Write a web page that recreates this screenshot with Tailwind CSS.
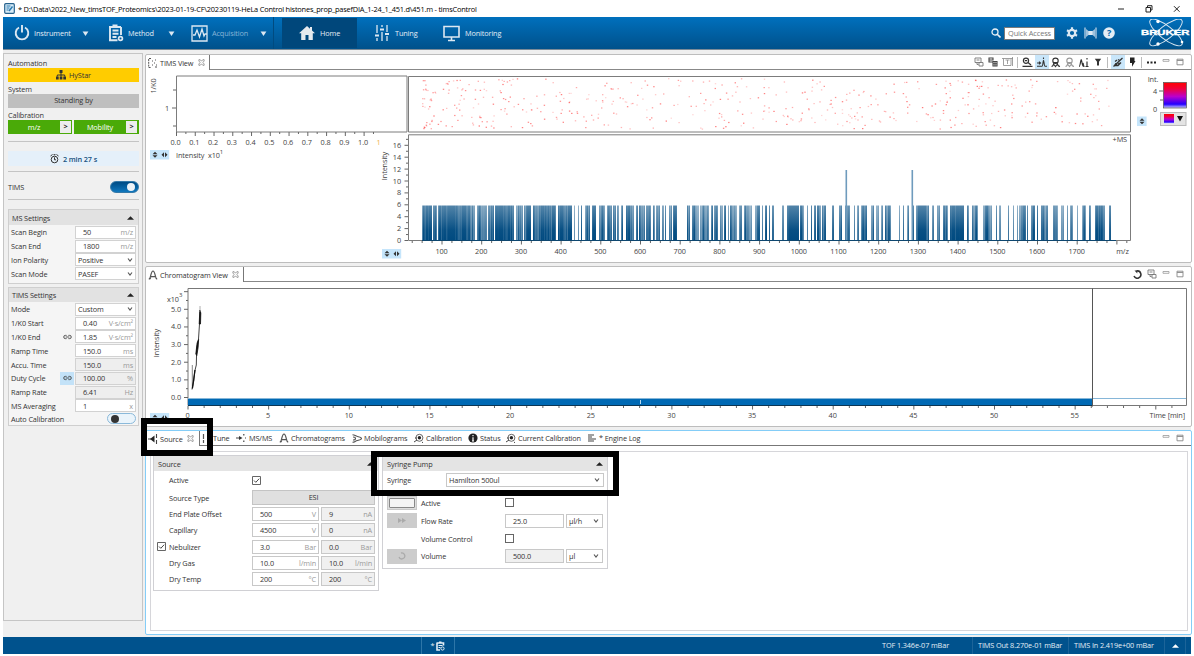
<!DOCTYPE html>
<html lang="en">
  <head>
    <meta charset="UTF-8" />
    <meta name="viewport" content="width=device-width, initial-scale=1.0" />
    <script src="https://cdn.jsdelivr.net/npm/@tailwindcss/browser@4"></script>
    <title>timsControl</title>
  </head>
  <body class="w-[1194px] h-[656px] overflow-hidden bg-white font-['Open_Sans',sans-serif] text-[7.3px] leading-[10px] tracking-[-0.12px] text-[#333]">
    <!-- Shared icons -->
    <svg class="hidden">
      <symbol id="i-close" viewBox="0 0 8 8"><path d="M1 .8h1.500L4 2.500 5.500 .8H7v1.500L5.600 4 7 5.700v1.500H5.500L4 5.500 2.500 7.200H1V5.700L2.400 4 1 2.300z" fill="none" stroke="#777" stroke-width=".8" /></symbol>
      <symbol id="i-chrom" viewBox="0 0 10 10"><path d="M.8 9.200c1.500-.3 1.600-2 2-4C3.400 2.400 3.800 1 5 1s1.600 1.400 2.200 4.200c.4 2 .5 3.700 2 4M2.500 6.600h5M2.700 7.500c-.3 1-.8 1.500-1.300 1.500" fill="none" stroke="#555" stroke-width="1.200" /></symbol>
      <symbol id="i-target" viewBox="0 0 10 10"><circle cx="5.400" cy="4.800" r="3.500" fill="none" stroke="#555" stroke-width=".9" /><circle cx="5.400" cy="4.800" r="1.700" fill="#222" /><path d="M0 9l3-2M1 5h2M8 9l1 .8" stroke="#444" stroke-width="1" /></symbol>
      <symbol id="i-min" viewBox="0 0 8 8"><path d="M1 1.500h6v1.800H1z" fill="none" stroke="#999" stroke-width=".8" /></symbol>
      <symbol id="i-max" viewBox="0 0 8 8"><path d="M1 1.200h6v5.600H1zM1 2.500h6" fill="none" stroke="#888" stroke-width=".9" /></symbol>
      <symbol id="i-copy" viewBox="0 0 10 10"><path d="M1 1h6v4.500H1zM2.500 3h3M5 5.500h4v3.500H5zM3 5.500v2h1.500" fill="none" stroke="currentColor" stroke-width=".9" /></symbol>
      <symbol id="i-link" viewBox="0 0 10 6"><path d="M4 1.200H2.600a1.800 1.800 0 0 0 0 3.600H4M6 1.200h1.400a1.800 1.800 0 0 1 0 3.600H6M3 3h4" fill="none" stroke="#333" stroke-width=".9" /></symbol>
      <symbol id="i-down" viewBox="0 0 6 6"><path d="M1 1.500l2 2.700 2-2.700" fill="none" stroke="#555" stroke-width="1.100" /></symbol>
      <symbol id="i-up" viewBox="0 0 8 4"><path d="M0 4L4 0l4 4z" fill="#222" /></symbol>
      <symbol id="i-caret" viewBox="0 0 8 6"><path d="M.5.500h7L4 6z" fill="#dce8f2" /></symbol>
      <symbol id="i-check" viewBox="0 0 9 9"><path d="M.5.500h8v8h-8z" fill="#fff" stroke="#555" stroke-width=".9" /><path d="M2 4.500l1.800 1.800L7.200 2.700" fill="none" stroke="#333" stroke-width=".9" /></symbol>
      <symbol id="i-peak" viewBox="0 0 11 11"><circle cx="5.500" cy="3.800" r="2.700" fill="none" stroke="currentColor" stroke-width="1.100" /><path d="M1.500 9.500c2 0 2-2.500 2.500-4h3c.4 2 .6 3.600 3 4M3.500 7l2 2.500 2-2.500" fill="none" stroke="currentColor" stroke-width="1.100" /></symbol>
    </svg>

    <div class="flex flex-col w-[1194px] h-[656px]">
      <!-- Title bar -->
      <header class="flex items-center h-[17px] pl-1 shrink-0">
        <svg class="w-[11px] h-[11px]" viewBox="0 0 11 11"><rect x=".7" y=".7" width="9.600" height="9.600" rx="1" fill="#d8ecf7" stroke="#28638e" stroke-width="1.200" /><path d="M2.500 3h4M2.500 5h3M2.500 7h2" stroke="#2b79b0" /><path d="M5 8l3.500-4.500" stroke="#2b79b0" stroke-width="1.500" /></svg>
        <h1 class="ml-[3px] text-[7.400px] tracking-[-0.200px] text-black whitespace-nowrap">* D:\Data\2022_New_timsTOF_Proteomics\2023-01-19-CF\20230119-HeLa Control histones_prop_pasefDIA_1-24_1_451.d\451.m - timsControl</h1>
        <svg class="ml-auto mr-3 w-[68px] h-[10px]" viewBox="0 0 68 10"><path d="M4 5h6M32 3.500h4.500V8H32zM33.500 3V1.700h4.500V6h-1M60 2.200l5.500 5.500M65.500 2.200L60 7.700" fill="none" stroke="#222" stroke-width="1" /></svg>
      </header>

      <!-- Main navigation -->
      <nav class="flex items-center h-[32px] mx-[3px] shrink-0 bg-linear-to-b from-[#0070bd] to-[#00518b] text-[#e4eef6]">
        <svg class="ml-[11px] w-4 h-4" viewBox="0 0 16 16"><path d="M5 2.500a6.300 6.300 0 1 0 6 0M8 0v7.500" fill="none" stroke="#dce8f2" stroke-width="1.900" /></svg>
        <span class="ml-1 w-[48px]">Instrument</span>
        <svg class="w-[7px] h-[5px]"><use href="#i-caret" /></svg>
        <svg class="ml-[19px] w-4 h-[18px]" viewBox="0 0 16 18"><path d="M1 3h12M4.500 1.500h5M2 3v13M1 16.200h8.500M13 3v8M4.500 6.500h6M4.500 9.700h6M4.500 13h4" fill="none" stroke="#dce8f2" stroke-width="1.900" /><circle cx="12.500" cy="14.500" r="1.900" fill="none" stroke="#dce8f2" stroke-width="1.700" /></svg>
        <span class="ml-1 w-[40px]">Method</span>
        <svg class="w-[7px] h-[5px]"><use href="#i-caret" /></svg>
        <svg class="ml-[16px] w-[17px] h-[17px]" viewBox="0 0 17 17"><path d="M1 1h15v15H1z" fill="none" stroke="#dce8f2" stroke-width="1.300" /><path d="M2 10h2l2-5 2.500 7L11 4l2 7 1-2h2" fill="none" stroke="#dce8f2" stroke-width="1.300" /></svg>
        <span class="ml-1 w-[48px] text-[#87b4d6]">Acquisition</span>
        <svg class="w-[7px] h-[5px]"><use href="#i-caret" /></svg>
        <div class="ml-[6px] w-px h-full bg-[#004b80]"></div>
        <div class="ml-[8px] flex items-center w-[75px] h-[30px] bg-[#00477b]">
          <svg class="ml-[17px] w-4 h-[14px]" viewBox="0 0 16 14"><path d="M8 0L0 7.300h2.200V14H6.500V9h3v5h4.300V7.300H16L13 4.500V1h-2v1.700z" fill="#e6eaee" /></svg>
          <span class="ml-[5px]">Home</span>
        </div>
        <svg class="ml-[17px] w-4 h-[18px]" viewBox="0 0 16 18"><path d="M3 1v8M3 14v3M8 1v2M8 8v9M13 1v7M13 12v5" stroke="#dce8f2" stroke-width="1.300" /><path d="M1 11.500h4M6 5.500h4M11 10h4" stroke="#dce8f2" stroke-width="2.200" /></svg>
        <span class="ml-[5px] w-[48px]">Tuning</span>
        <svg class="w-[17px] h-[17px]" viewBox="0 0 17 17"><path d="M1 1.500h15v10.500H1zM8.500 12v3M5 15.500h7" fill="none" stroke="#dce8f2" stroke-width="1.600" /></svg>
        <span class="ml-[5px]">Monitoring</span>
        <svg class="ml-auto w-[10px] h-[10px]" viewBox="0 0 10 10"><circle cx="4" cy="4" r="3" fill="none" stroke="#e8f0f6" stroke-width="1.300" /><path d="M6.200 6.200L9.500 9.500" stroke="#e8f0f6" stroke-width="1.600" /></svg>
        <div class="ml-[3px] w-[51px] h-[13px] pl-[3px] bg-white border border-[#7a7a7a] text-[#777] text-[7.400px] leading-[11px] whitespace-nowrap">Quick Access</div>
        <svg class="ml-[11px] w-3 h-3" viewBox="0 0 12 12"><circle cx="6" cy="6" r="3.200" fill="none" stroke="#dde9f3" stroke-width="2.200" /><path d="M6 .3v2M6 9.700v2M1 3.200l1.800 1M9.200 7.800l1.800 1M1 8.800l1.800-1M9.200 4.200l1.800-1" stroke="#dde9f3" stroke-width="2.200" /></svg>
        <svg class="ml-[6px] w-[13px] h-3" viewBox="0 0 13 12"><path d="M1 .5v11M12 .5v11" stroke="#b9d2e6" stroke-width="1.300" /><path d="M2 2l2.500 2h4L11 2v8L8.500 8h-4L2 10z" fill="#9fc2dd" /><path d="M4.500 4h4v4h-4z" fill="#dde9f3" /></svg>
        <svg class="ml-[6px] w-3 h-3" viewBox="0 0 12 12"><circle cx="6" cy="6" r="5.800" fill="#e4edf5" /><text x="6" y="9.300" text-anchor="middle" font-size="9" font-weight="700" fill="#0062a5">?</text></svg>
        <svg class="ml-[26px] mr-px w-[49px] h-[28px]" viewBox="0 0 49 28">
          <g fill="none" stroke="#d8e6f1" stroke-width="1"><ellipse cx="25" cy="13.500" rx="20" ry="6.500" transform="rotate(38 25 13.500)" /><ellipse cx="25" cy="13.500" rx="20" ry="6.500" transform="rotate(-38 25 13.500)" /></g>
          <circle cx="17" cy="2.500" r="1.700" fill="#fff" /><circle cx="17" cy="25" r="1.700" fill="#fff" /><circle cx="41" cy="23" r="1.300" fill="#fff" />
          <text x="0" y="16.200" font-family="Liberation Sans" font-weight="700" font-size="7.800" letter-spacing="0" textLength="48.500" lengthAdjust="spacingAndGlyphs" fill="#fff" stroke="#fff" stroke-width=".35">BRUKER</text>
        </svg>
      </nav>

      <div class="flex h-[588px] mx-[3px] bg-[#efefef] border-t border-[#7b8b98] shrink-0">
        <!-- Status and settings sidebar -->
        <aside class="w-[140px] h-[568px] mt-[3px] pl-1 pr-[3px] pt-1 bg-[#f0f0f0] border border-[#c5c5c5] flex flex-col shrink-0">
          <div class="h-[10px]">Automation</div>
          <div class="h-[14px] flex items-center justify-center gap-[3px] bg-[#fc0]">
            <svg class="w-[10px] h-[10px]" viewBox="0 0 10 10"><path d="M3.500 0h3v3h-3zM0 6.500h2.700v3H0zM3.700 6.500h2.700v3H3.700zM7.300 6.500H10v3H7.300z" fill="#333" /><path d="M5 3v3.500M1.300 6.500V5h7.400v1.500" fill="none" stroke="#333" stroke-width="1" /></svg>HyStar
          </div>
          <div class="h-[12px] pt-[2px]">System</div>
          <div class="h-[14px] bg-[#bfbfbf] text-center leading-[13px]">Standing by</div>
          <div class="h-[12px] pt-[2px]">Calibration</div>
          <div class="flex gap-[2px] h-[14px] text-white">
            <div class="flex-1 flex items-center bg-[#4aaa08] pr-px"><span class="flex-1 text-center">m/z</span><span class="w-[11px] h-[12px] bg-[#ececec] text-[#222] font-bold text-center">&gt;</span></div>
            <div class="flex-1 flex items-center bg-[#4aaa08] pr-[2px]"><span class="flex-1 text-center">Mobility</span><span class="w-[11px] h-[12px] bg-[#ececec] text-[#222] font-bold text-center">&gt;</span></div>
          </div>
          <div class="mt-[7px] h-px bg-[#c4c4c4]"></div>
          <div class="mt-[9px] h-[15px] flex items-center justify-center gap-1 bg-[#e5f0fa] text-[#17507e] font-semibold">
            <svg class="w-[9px] h-[10px]" viewBox="0 0 9 10"><circle cx="4.500" cy="5.500" r="3.300" fill="none" stroke="#333" stroke-width="1" /><path d="M4.500 3.300v2.500h1.500M.5 2l2-1.500M8.500 2l-2-1.500M3.500.7h2" fill="none" stroke="#333" stroke-width="1" /></svg>2 min 27 s
          </div>
          <div class="mt-[5px] h-px bg-[#c4c4c4]"></div>
          <div class="flex items-center justify-between h-[27px] pt-[2px]">
            TIMS
            <div class="w-[29px] h-[12px] rounded-full bg-linear-to-b from-[#004b84] to-[#1178be] border border-[#3579a8] flex items-center justify-end pr-[3px]"><div class="size-2 rounded-full bg-[#eef3f7]"></div></div>
          </div>
          <div class="h-px bg-[#c4c4c4]"></div>

          <section class="mt-[9px] h-[75px] border border-[#cfcfcf] bg-[#f5f5f5]">
            <h2 class="flex items-center justify-between h-[15px] px-[3px] pr-1 bg-[#e2e2e2]">MS Settings<svg class="w-[7px] h-1"><use href="#i-up" /></svg></h2>
            <div id="ms-settings" class="pl-[2px] pr-[2px] pt-[0.500px]"></div>
          </section>
          <section class="mt-[3px] h-[139px] border border-[#cfcfcf] bg-[#f5f5f5]">
            <h2 class="flex items-center justify-between h-[14px] px-[3px] pr-1 bg-[#e2e2e2]">TIMS Settings<svg class="w-[7px] h-1"><use href="#i-up" /></svg></h2>
            <div id="tims-settings" class="pl-[2px] pr-[2px] pt-[0.500px]"></div>
            <div class="flex items-center justify-between h-[12px] pl-[2px] pr-[2px]">Auto Calibration
              <div class="w-[29px] h-[11px] rounded-full bg-[#eaf4fb] border border-[#8ab9da] flex items-center pl-[3px]"><div class="size-2 rounded-full bg-[#333]"></div></div>
            </div>
          </section>
        </aside>

        <div class="flex flex-col flex-1 ml-[2px] mt-[4px]">
          <!-- TIMS view -->
          <section class="h-[209px] bg-white border border-[#bdbdbd] rounded-[2px] shrink-0">
            <div class="flex h-[15px]">
              <div class="flex items-center w-[64px] pl-[2px] border-r border-[#777]">
                <svg class="w-[10px] h-[10px]" viewBox="0 0 10 10"><path d="M3 .5H.7v9H3M4 3h1M7 2h1M6 5h1M4 7h1M8 7h1M7 9h2" fill="none" stroke="#555" stroke-width="1" stroke-dasharray="2 .8" /></svg>
                <span class="ml-[2px] w-[38px]">TIMS View</span><svg class="w-[7px] h-[7px]"><use href="#i-close" /></svg>
              </div>
              <div class="flex-1 flex items-center justify-end border-b border-[#888] pr-[7px] text-[#777]">
                <svg class="w-[10px] h-[10px]"><use href="#i-copy" /></svg>
                <svg class="ml-1 w-[10px] h-[10px]" viewBox="0 0 10 10"><path d="M1 .5v4.500h4M1 1h4v2H1M5 4.500h4V9H5zM5 6.700h4M7 4.500V9" fill="none" stroke="#444" stroke-width="1.100" /></svg>
                <svg class="ml-1 w-[12px] h-[10px]" viewBox="0 0 12 10"><path d="M1.500 1.500v7h7.500v-7M0 1.500h11M3.500 3h4M5.500 3v4M10.500 0v9" fill="none" stroke="#888" stroke-width=".8" /></svg>
                <div class="ml-[3px] w-px h-[11px] bg-[#bbb]"></div>
                <svg class="ml-1 w-[11px] h-[11px]" viewBox="0 0 11 11"><circle cx="4" cy="3.700" r="2.600" fill="none" stroke="#333" stroke-width="1.200" /><path d="M2.800 3.700h2.400M6 5.500L9 8M.5 9.300h10" fill="none" stroke="#333" stroke-width="1.200" /></svg>
                <div class="ml-[2px] w-[14px] h-[14px] bg-[#c9e6fa] flex items-center justify-center"><svg class="w-[10px] h-[10px]" viewBox="0 0 10 10"><path d="M0 6h3M2 4.700L3.500 6 2 7.300M6.500 .5v1.500M0 9.300h5c1 0 1-6 1.500-6s.6 6 1.500 6h2" fill="none" stroke="#333" stroke-width="1.100" /></svg></div>
                <svg class="ml-px w-[11px] h-[11px] text-[#333]"><use href="#i-peak" /></svg>
                <svg class="ml-[3px] w-[11px] h-[11px] text-[#999]"><use href="#i-peak" /></svg>
                <svg class="ml-[4px] w-[10px] h-[10px]" viewBox="0 0 10 10"><path d="M0 9.500c1.500 0 1.500-7 2.200-7s.8 7 2.300 7M4 6c.5 2 .5 3.500 1.500 3.500M8 9.500V4.500M8 1v1.500M6.500 9.500h3" fill="none" stroke="#333" stroke-width="1.200" /></svg>
                <svg class="ml-[5px] w-2 h-2" viewBox="0 0 8 8"><path d="M.8.700h6.400L5 3.700V7.500H3V3.700z" fill="#333" /></svg>
                <div class="ml-[5px] w-px h-[11px] bg-[#bbb]"></div>
                <div class="ml-[3px] w-[14px] h-[14px] bg-[#c9e6fa] flex items-center justify-center"><svg class="w-[10px] h-[10px]" viewBox="0 0 10 10"><path d="M.5 9.500L9.500 1M2 4.500l2-1.500M5 2.500l1.500 1M1 8.500h4l3-3M5 7l2-1" stroke="#333" stroke-width="1.300" fill="none" /><circle cx="3" cy="7.300" r="1.200" fill="#333" /></svg></div>
                <svg class="ml-[3px] w-2 h-[10px]" viewBox="0 0 8 10"><path d="M2 .5h4.500V4H7.500L4 9.800V6H2z" fill="#222" /></svg>
                <div class="ml-[5px] w-px h-[11px] bg-[#bbb]"></div>
                <svg class="ml-[5px] w-[9px] h-[3px]" viewBox="0 0 9 3"><path d="M0 1.500h2M3.500 1.500h2M7 1.500h2" stroke="#222" stroke-width="2" /></svg>
                <svg class="ml-[6px] w-2 h-2"><use href="#i-min" /></svg>
                <svg class="ml-[6px] w-2 h-2"><use href="#i-max" /></svg>
              </div>
            </div>
            <svg id="tims-plot" class="block w-[1045px] h-[191px]" viewBox="146 70 1045 191" fill="#444" letter-spacing="-.1">
              <defs>
                <linearGradient id="ramp" x2="0" y2="1"><stop offset="0" stop-color="#f00" /><stop offset=".25" stop-color="#f0003c" /><stop offset=".55" stop-color="#b0c" /><stop offset=".85" stop-color="#20f" /><stop offset="1" stop-color="#ccf" /></linearGradient>
                <linearGradient id="spike" x2="0" y2="1"><stop offset="0" stop-color="#004a80" stop-opacity=".68" /><stop offset=".7" stop-color="#004a80" stop-opacity=".97" /><stop offset="1" stop-color="#004a80" /></linearGradient>
              </defs>
              <g fill="none" stroke="#7c7c7c"><path d="M407 76H176.500v56H407z" /><path d="M408.500 76.500H1130.500V132H408.500zM408.500 134.800H1130.500V240.500H408.500z" /></g>
            </svg>
          </section>

          <!-- Chromatogram view -->
          <section class="h-[161px] mt-[3px] bg-white border border-[#bdbdbd] rounded-[2px] shrink-0">
            <div class="flex h-[16px] pb-px">
              <div class="flex items-center w-[98px] pl-[2px] border-r border-[#777]">
                <svg class="w-[10px] h-[10px]"><use href="#i-chrom" /></svg>
                <span class="ml-[2px] w-[72px]">Chromatogram View</span><svg class="w-[7px] h-[7px]"><use href="#i-close" /></svg>
              </div>
              <div class="flex-1 flex items-center justify-end border-b border-[#888] pr-[7px] text-[#777]">
                <svg class="w-[9px] h-[9px]" viewBox="0 0 9 9"><path d="M3.500 1A3.600 3.600 0 1 1 1 6" fill="none" stroke="#333" stroke-width="1.600" /><path d="M1.500 .5h2.800v3z" fill="#333" /></svg>
                <svg class="ml-[5px] w-[10px] h-[10px]"><use href="#i-copy" /></svg>
                <svg class="ml-[5px] w-2 h-2"><use href="#i-min" /></svg>
                <svg class="ml-[6px] w-2 h-2"><use href="#i-max" /></svg>
              </div>
            </div>
            <svg id="chrom-plot" class="block w-[1045px] h-[143px]" viewBox="146 283 1045 143" fill="#444" letter-spacing="-.1">
              <path d="M188 288.500H1186.500V405.500H188z" fill="none" stroke="#777" />
              <path d="M188 398.500H1186" stroke="#86b6d8" />
              <path d="M188 399h904.500v6.500H188z" fill="#0069b4" />
              <path d="M188 405.500h904.500" stroke="#0b3553" />
              <path d="M1092.500 288.500v118" stroke="#555" />
              <path d="M192.300 389v-24" stroke="#888" fill="none" />
              <path d="M192 389.500l1.800-9 1-9.500 1.500-6 .4-16 1.800-10 .8-12 .9-16" stroke="#111" stroke-width=".8" fill="none" />
              <path d="M195.800 354l1.300-11 1.500-3.500-.5 8-1.300 8zM199.200 324l.6-14 1 3-.3 11z" stroke="#111" stroke-width=".8" fill="#111" />
              <path d="M192.500 388l2.500-18" stroke="#111" stroke-width="1.300" />
              <path d="M200 312v-6" stroke="#999" stroke-width=".8" />
              <path d="M640.500 400v4" stroke="#b8d7ec" />
            </svg>
          </section>

          <!-- Source settings -->
          <section class="relative h-[205px] mt-[3px] bg-white border border-[#84cdf7] rounded-[2px] shrink-0">
            <div class="flex h-[16px] pb-px">
              <div class="flex items-center w-[54px] pl-[2px] border-r border-[#777]">
                <svg class="w-[10px] h-[10px]" viewBox="0 0 10 10"><path d="M0 5h3M8.500 0v4M8.500 6v4" stroke="#444" stroke-width="1.100" /><path d="M2 5l4.500-3.500v7z" fill="#222" /></svg>
                <span class="ml-[2px] w-[27px]">Source</span><svg class="w-[7px] h-[7px]"><use href="#i-close" /></svg>
              </div>
              <div class="flex-1 flex items-center border-b border-[#777] pr-[7px] whitespace-nowrap">
                <svg class="w-[9px] h-[9px]" viewBox="0 0 9 9"><path d="M3.500 0v5M3.500 6v3" stroke="#555" stroke-width="1.200" /></svg>
                <span class="ml-1 w-[23px]">Tune</span>
                <svg class="w-[10px] h-[10px]" viewBox="0 0 10 10"><path d="M0 5h3M7.800 1v1.500M7.800 7.500v1.500M9 5h1" stroke="#444" stroke-width="1.200" /><path d="M3 3l3.500 2L3 7z" fill="#333" /></svg>
                <span class="ml-[3px] w-[30px]">MS/MS</span>
                <svg class="w-[10px] h-[10px]"><use href="#i-chrom" /></svg>
                <span class="ml-[2px] w-[61px]">Chromatograms</span>
                <svg class="w-[10px] h-[9px]" viewBox="0 0 10 9"><path d="M.5.800c2.500 0 2.500 1.200 5 1.700C8 3 9.500 3.500 9.500 4.500S8 6 5.500 6.500C3 7 3 8.200.5 8.200M1 3C3 3 3.500 3.700 3.500 4.500S3 6 1 6" fill="none" stroke="#555" stroke-width="1.100" /></svg>
                <span class="ml-[2px] w-[50px]">Mobilograms</span>
                <svg class="w-[10px] h-[10px]"><use href="#i-target" /></svg>
                <span class="ml-[2px] w-[42px]">Calibration</span>
                <svg class="w-[10px] h-[10px]" viewBox="0 0 10 10"><circle cx="5" cy="5" r="4.600" fill="#222" /><path d="M5 2v1.300M5 4.200V8M4 8h2" stroke="#fff" stroke-width="1.200" /></svg>
                <span class="ml-[2px] w-[26px]">Status</span>
                <svg class="w-[10px] h-[10px]"><use href="#i-target" /></svg>
                <span class="ml-[2px] w-[70px]">Current Calibration</span>
                <svg class="w-[8px] h-[8px]" viewBox="0 0 8 8"><path d="M0 1h6M0 3h4M0 5h8M0 7h6" stroke="#444" stroke-width="1.100" /></svg>
                <span class="ml-[3px]">* Engine Log</span>
                <svg class="ml-auto w-2 h-2"><use href="#i-min" /></svg>
                <svg class="ml-[6px] w-2 h-2"><use href="#i-max" /></svg>
              </div>
            </div>
            <div class="mt-1 ml-1 mr-[3px] h-[180px] border border-[#d6d6da] pl-[3px] pt-[3px] flex gap-[3px] items-start">
              <div class="w-[226px] h-[136px] -ml-px border border-[#d0d0d4]">
                <h2 class="flex items-center justify-between h-[15px] px-1 bg-[#e4e4e4]">Source<svg class="w-[7px] h-1"><use href="#i-up" /></svg></h2>
                <div class="flex items-center h-[18px] pl-[15px]"><span class="w-[83px]">Active</span><svg class="size-[9px]"><use href="#i-check" /></svg></div>
                <div class="flex items-center h-[17px] pl-[15px]"><span class="w-[83px]">Source Type</span><div class="w-[123px] h-[15px] bg-[#e0e0e0] border border-[#c4c4c4] text-center leading-[13px]">ESI</div></div>
                <div id="source-rows"></div>
              </div>
              <div class="w-[226px] h-[114px] border border-[#d0d0d4]">
                <h2 class="flex items-center justify-between h-[15px] px-1 bg-[#e4e4e4]">Syringe Pump<svg class="w-[7px] h-1"><use href="#i-up" /></svg></h2>
                <div class="flex items-center h-[18px] pl-1"><span class="w-[59px]">Syringe</span><div class="flex items-center justify-between w-[158px] h-[14px] pl-[2px] pr-[3px] border border-[#c8c8c8]">Hamilton 500ul<svg class="size-[6px]"><use href="#i-down" /></svg></div></div>
                <div class="flex items-center h-[15px] mt-[6px] pl-1"><div class="w-[30px] h-[14px] bg-[#dedede] border border-[#c8c8c8] p-px"><div class="w-full h-full border border-[#888] bg-[#f4f4f4] rounded-[1px]"></div></div><span class="ml-1 w-[84px]">Active</span><div class="size-[9px] border border-[#666]"></div></div>
                <div class="flex items-center h-[21px] pl-1"><div class="w-[30px] h-[15px] bg-[#ccc] flex items-center justify-center"><svg class="w-2 h-[5px]" viewBox="0 0 8 5"><path d="M0 0l4 2.500L0 5zM4 0l4 2.500L4 5z" fill="#aaa" /></svg></div><span class="ml-1 w-[84px]">Flow Rate</span><div class="w-[59px] h-[14px] border border-[#c8c8c8] pl-[7px] leading-[12px]">25.0</div><div class="ml-[2px] flex items-center justify-between w-[37px] h-[14px] pl-[2px] pr-[3px] border border-[#c8c8c8]">µl/h<svg class="size-[6px]"><use href="#i-down" /></svg></div></div>
                <div class="flex items-center h-[15px] pl-[38px]"><span class="w-[84px]">Volume Control</span><div class="size-[9px] border border-[#666]"></div></div>
                <div class="flex items-center h-[20px] pl-1"><div class="w-[30px] h-[15px] bg-[#ccc] flex items-center justify-center"><svg class="w-2 h-2" viewBox="0 0 8 8"><path d="M3 1a3 3 0 1 1-2 4" fill="none" stroke="#aaa" stroke-width="1.300" /></svg></div><span class="ml-1 w-[84px]">Volume</span><div class="w-[59px] h-[14px] bg-[#f0f0f0] border border-[#c8c8c8] pl-[7px] leading-[12px]">500.0</div><div class="ml-[2px] flex items-center justify-between w-[37px] h-[14px] pl-[2px] pr-[3px] border border-[#c8c8c8]">µl<svg class="size-[6px]"><use href="#i-down" /></svg></div></div>
              </div>
            </div>
            <!-- Callout frames -->
            <div class="absolute left-[-5px] top-[-13px] w-[72px] h-[38px] border-[6.500px] border-black"></div>
            <div class="absolute left-[225px] top-[20px] w-[248px] h-[45px] border-[6.500px] border-black"></div>
          </section>
        </div>
      </div>

      <!-- Status bar -->
      <footer class="flex items-center h-[17px] mx-[3px] bg-[#00528d] text-[#e4eef6] whitespace-nowrap leading-[16px]">
        <div class="ml-[418px] w-[34px] h-full border-x border-[#2d76a8] flex items-center justify-center gap-[2px]">*
          <svg class="w-[9px] h-[10px]" viewBox="0 0 9 10"><path d="M1 2h6.500v2.500M1 1.500v7.500h3M3 1.200h2.500" fill="none" stroke="#e4eef6" stroke-width="1.600" /><path d="M2.500 4.500h4M2.500 6.500h2" stroke="#e4eef6" /><circle cx="6.500" cy="7.500" r="1.600" fill="none" stroke="#e4eef6" /></svg>
        </div>
        <span class="ml-auto w-[90px] h-full">TOF 1.346e-07 mBar</span>
        <span class="w-[96px] h-full border-l border-[#1c6499] pl-[5px]">TIMS Out 8.270e-01 mBar</span>
        <span class="w-[96px] h-full border-l border-[#1c6499] pl-[5px]">TIMS In 2.419e+00 mBar</span>
        <span class="w-[22px] h-full border-x border-[#1c6499] mr-[5px] flex items-center justify-center"><svg class="w-[7px] h-1" viewBox="0 0 8 4"><path d="M0 4L4 0l4 4z" fill="#fff" /></svg></span>
      </footer>
    </div>

    <script>
      // Settings rows: label, value, unit ("v" = dropdown), readonly, link icon
      const row = ([label, value, unit, ro, link]) => `
        <div class="flex items-center h-[13.800px] whitespace-nowrap">
          <span class="w-[49px]">${label}</span>
          <span class="w-[14px] h-[13px] mr-px flex items-center justify-center ${link === 2 ? "bg-[#c3e2f8]" : ""}">${link ? '<svg class="w-[9px] h-[6px]"><use href="#i-link" /></svg>' : ""}</span>
          <div class="flex-1 h-[13px] flex items-center justify-between border border-[#d2d2d2] pr-[2px] ${ro ? "bg-[#eee]" : "bg-white"} ${unit === "v" ? "pl-[2px]" : "pl-[7px]"}">
            <span>${value}</span>${unit === "v" ? '<svg class="size-[6px]"><use href="#i-down" /></svg>' : `<span class="text-[#999]">${unit}</span>`}
          </div>
        </div>`;
      document.getElementById("ms-settings").innerHTML = [
        ["Scan Begin", "50", "m/z"],
        ["Scan End", "1800", "m/z"],
        ["Ion Polarity", "Positive", "v"],
        ["Scan Mode", "PASEF", "v"],
      ].map(row).join("");
      document.getElementById("tims-settings").innerHTML = [
        ["Mode", "Custom", "v"],
        ["1/K0 Start", "0.40", "V·s/cm²"],
        ["1/K0 End", "1.85", "V·s/cm²", 0, 1],
        ["Ramp Time", "150.0", "ms"],
        ["Accu. Time", "150.0", "ms", 1],
        ["Duty Cycle", "100.00", "%", 1, 2],
        ["Ramp Rate", "6.41", "Hz", 1],
        ["MS Averaging", "1", "x"],
      ].map(row).join("");
      document.getElementById("source-rows").innerHTML = [
        ["End Plate Offset", "500", "V", "9", "nA"],
        ["Capillary", "4500", "V", "0", "nA"],
        ["Nebulizer", "3.0", "Bar", "0.0", "Bar"],
        ["Dry Gas", "10.0", "l/min", "10.0", "l/min"],
        ["Dry Temp", "200", "°C", "200", "°C"],
      ].map(([label, a, ua, b, ub], i) => `
        <div class="flex items-center h-[16.300px] pl-[3px]">
          <span class="w-3">${i === 2 ? '<svg class="size-[9px]"><use href="#i-check" /></svg>' : ""}</span>
          <span class="w-[83px]">${label}</span>
          <div class="w-[67px] h-[14px] flex items-center justify-between pl-[7px] pr-[2px] bg-white border border-[#c8c8c8]">${a}<span class="text-[#999]">${ua}</span></div>
          <div class="ml-[2px] w-[54px] h-[14px] flex items-center justify-between pl-[7px] pr-[2px] bg-[#f0f0f0] border border-[#c8c8c8]">${b}<span class="text-[#999]">${ub}</span></div>
        </div>`).join("");

      let seed = 7;
      const rnd = () => (seed = (seed * 16807) % 2147483647) / 2147483647;
      const line = (x1, y1, x2, y2) => `<path d="M${x1} ${y1}L${x2} ${y2}" stroke="#666"/>`;
      const text = (x, y, s, anchor = "middle", extra = "") =>
        `<text x="${x}" y="${y}" text-anchor="${anchor}" ${extra}>${s}</text>`;
      const buttons = (x, y, n = 2) => {
        let s = `<rect x="${x}" y="${y}" width="${n * 9.6}" height="9.500" fill="#c5e5fb"/>`;
        s += `<path d="M${x + 2.5} ${y + 4.3}l2.500-2.500 2.500 2.500zM${x + 2.5} ${y + 5.300}l2.500 2.500 2.500-2.500z" fill="#333"/>`;
        if (n > 1) s += `<path d="M${x + 14} ${y + 2.3}l-2.500 2.500 2.500 2.500zM${x + 15} ${y + 2.300}l2.500 2.500-2.500 2.500z" fill="#333"/>`;
        return s;
      };

      // TIMS plot
      let out = "";
      for (let i = 0; i <= 21; i++) {
        const x = 176.5 + i * 9.38;
        out += line(x, 132, x, i % 2 ? 134 : 136);
        if (i % 2 === 0) out += text(x - 1, 145, (i / 20).toFixed(1));
      }
      out += text(378.500, 145, "1", "middle", 'fill="#f0b050"');
      out += line(173, 90, 176, 90) + line(172, 108, 176, 108) + line(173, 126, 176, 126);
      out += text(167, 110.500, "1") + text(155.500, 86, "1/K0", "middle", 'transform="rotate(-90 155.500 86)"');
      out += buttons(150, 150) + text(176, 157.500, 'Intensity&#160; x10<tspan dy="-3.500" font-size="6">1</tspan>', "start");
      for (let v = 0; v <= 17; v++) {
        const y = 240.5 - v * 5.95;
        out += line(v % 2 ? 406 : 404.5, y, 408, y);
        if (v % 2 === 0) out += text(401, y + 2.5, v, "end");
      }
      out += text(387, 166, "Intensity", "middle", 'transform="rotate(-90 387 166)"');
      for (let mz = 25; mz <= 1825; mz += 25) {
        const x = 402.3 + mz * 0.397;
        out += line(x, 241, x, mz % 100 ? 243 : 244.5);
        if (mz % 100 === 0 && mz < 1800) out += text(x - 0.5, 254, mz);
      }
      out += text(1122.500, 254, "m/z") + text(1127, 142, "+MS", "end") + buttons(382, 249);

      // Peak clusters as [from, to] in plot pixels
      const peaks = [[422,431],[433,436],[438,469],[470,474],[477,480],[481,486],[488,493],[495,513],[516,522],[524,530],[533,555],[558,571],[574,574],[578,578],[581,581],[585,589],[592,595],[599,604],[607,611],[613,615],[617,618],[621,622],[626,633],[636,637],[639,644],[646,650],[653,654],[656,659],[662,663],[665,665],[669,671],[673,676],[687,689],[692,698],[700,708],[711,712],[714,717],[720,722],[724,725],[728,728],[730,736],[739,741],[744,751],[755,759],[762,762],[765,766],[769,769],[772,773],[782,783],[787,798],[800,803],[807,807],[811,811],[814,815],[817,820],[822,825],[832,833],[839,841],[845,849],[854,854],[857,858],[861,866],[871,873],[876,878],[881,882],[885,890],[899,899],[903,903],[907,908],[912,913],[916,928],[932,933],[937,939],[943,947],[950,963],[967,968],[972,977],[983,991],[996,996],[999,1000],[1008,1008],[1013,1013],[1017,1017],[1019,1025],[1027,1027],[1031,1034],[1037,1037],[1041,1047],[1053,1057],[1061,1063],[1067,1067],[1070,1072],[1077,1077],[1082,1085],[1089,1090],[1095,1104],[1109,1110]];
      for (const [a, b] of peaks) {
        // wide clusters are almost solid
        const base = b - a > 8 ? 0.62 : 0.45;
        let o = 0.7;
        for (let x = a; x <= b; x++) {
          o = 0.35 * o + 0.65 * (base + rnd() * 0.6);
          out += `<rect x="${x}" y="205.500" width="1" height="35" fill="url(#spike)" opacity="${Math.min(1, o + 0.05).toFixed(2)}"/>`;
        }
      }
      for (const x of [845.5, 911.5]) out += `<rect x="${x}" y="170" width="1.600" height="71" fill="#6f9bbd"/>`;
      out += '<path d="M422 240.500h694" stroke="#0d466f"/>';
      for (let i = 0; i < 500; i++) {
        const x = 422 + 690 * Math.pow(rnd(), 1.35);
        out += `<rect x="${x.toFixed(1)}" y="${(78 + rnd() * 51).toFixed(1)}" width="1.400" height="1.200" fill="#f33" opacity="${(0.2 + rnd() * 0.45).toFixed(2)}"/>`;
      }
      out += text(1153, 82, "Int.") + text(1157, 94, "4", "end") + text(1157, 111.500, "0", "end");
      out += line(1159, 91, 1163, 91) + line(1160, 100, 1163, 100);
      out += '<rect x="1163.500" y="82.500" width="23" height="25.500" fill="url(#ramp)" stroke="#555" stroke-width=".7"/>';
      out += '<rect x="1160.500" y="112.500" width="25.500" height="13" fill="#e4e4e4" stroke="#bbb"/><rect x="1164" y="114" width="10" height="9.500" fill="url(#ramp)"/><path d="M1177 116h6l-3 5.500z" fill="#111"/>';
      out += buttons(1137, 116.500, 1);
      document.getElementById("tims-plot").innerHTML += out;

      // Chromatogram axes
      out = "";
      for (let v = 0; v <= 12; v++) {
        const y = 397.5 - v * 8.82;
        out += line(v % 2 ? 186 : 184, y, 188, y);
        if (v % 2 === 0 && v < 12) out += text(181, y + 2.5, (v / 2).toFixed(1), "end");
      }
      out += text(167, 302, 'x10<tspan dy="-5" font-size="6">3</tspan>', "start");
      out += text(159, 343, "Intensity", "middle", 'transform="rotate(-90 159 343)"');
      for (let m = 0; m <= 61; m++) {
        const x = 188 + m * 16.13;
        out += line(x, 406, x, m % 5 ? 408 : 409.500);
        if (m % 5 === 0 && m < 60) out += text(x - 0.5, 417.500, m);
      }
      out += text(1185, 418, "Time [min]", "end") + buttons(150, 413);
      document.getElementById("chrom-plot").innerHTML += out;
    </script>
  </body>
</html>
